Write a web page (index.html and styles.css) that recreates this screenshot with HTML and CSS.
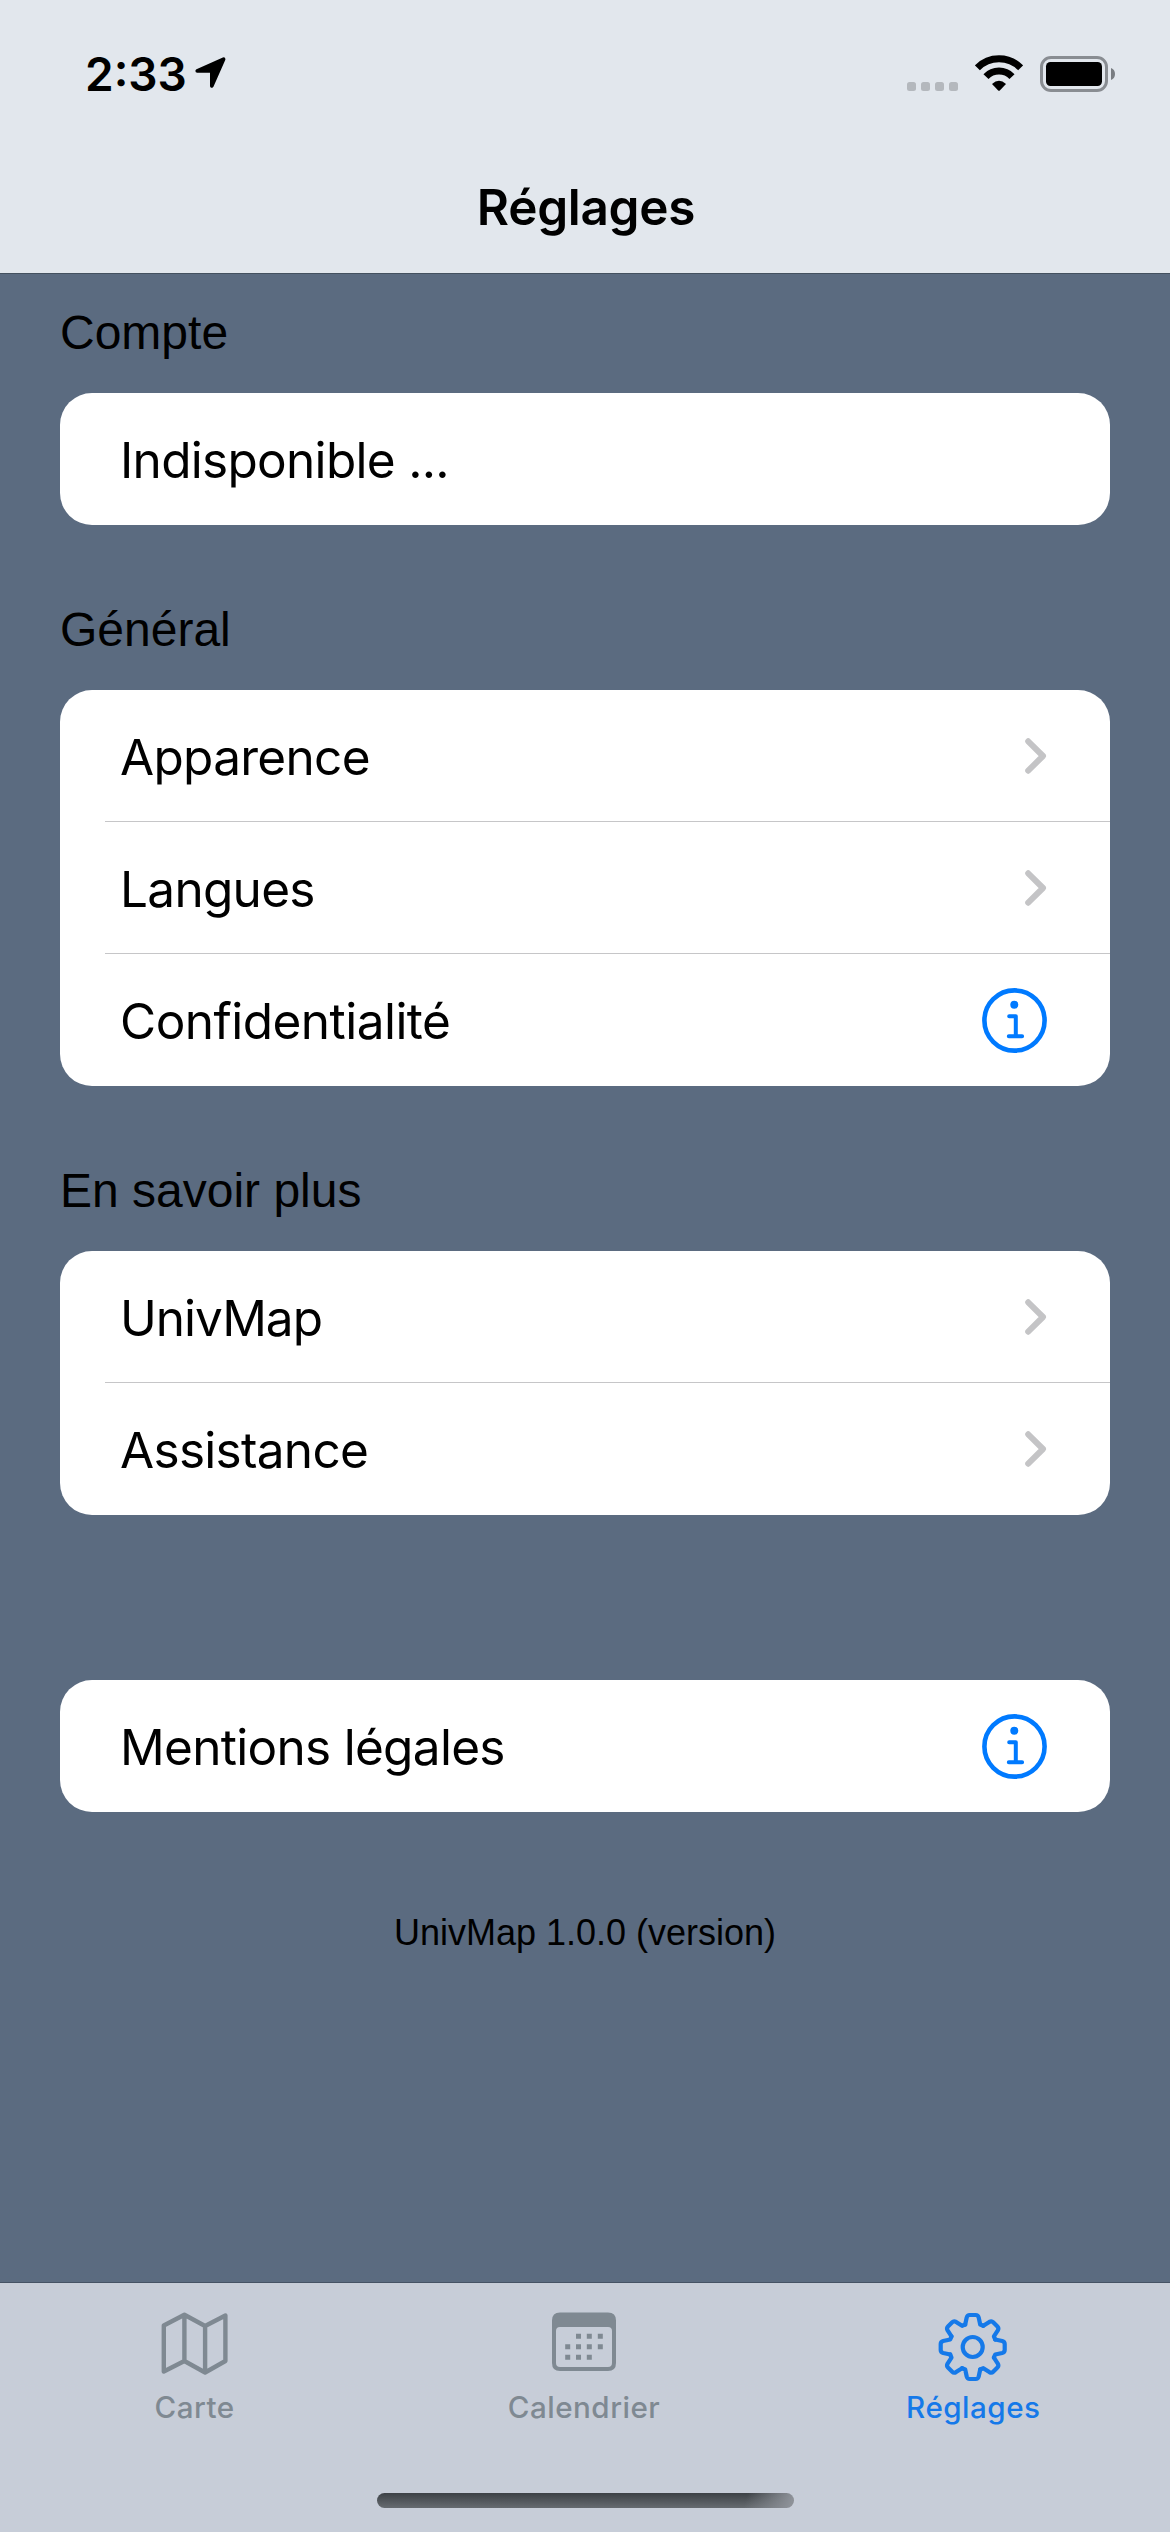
FILE: index.html
```html
<!DOCTYPE html>
<html lang="fr">
<head>
<meta charset="utf-8">
<title>Réglages</title>
<link rel="stylesheet" href="styles.css">
</head>
<body>
<svg width="0" height="0" class="defs">
  <symbol id="chevron" viewBox="0 0 22 36"><path d="M3.2 3.3 18 18 3.2 32.7" fill="none" stroke="#c4c4c6" stroke-width="6" stroke-linecap="round" stroke-linejoin="round"/></symbol>
  <symbol id="info" viewBox="0 0 65 65"><g fill="none" stroke="#007aff" stroke-width="4.6"><circle cx="32.5" cy="32.5" r="30.1"/><path d="M27.2 28.2h6.6v20M26.8 48.3h13.3" stroke-width="4" stroke-linecap="round" stroke-linejoin="round"/></g><circle cx="32.3" cy="16.8" r="4" fill="#007aff"/></symbol>
  <path id="tooth" d="M-7.5-22.5-6-29.5Q-5.3-32-3-32H3Q5.3-32 6-29.5L7.5-22.5 10.6-21.2"/>
</svg>
<div class="screen">
  <header class="top">
    <div class="status">
      <div class="clock"><span class="time">2:33</span>
        <svg class="arrow" width="32" height="32" viewBox="0 0 32 32"><path d="M2.2 14 28.6 2.2 16.8 29V14Z" stroke="#000" stroke-width="3.6" stroke-linejoin="round"/></svg>
      </div>
      <div class="indicators">
        <svg width="51" height="9" class="dots" fill="#b4b8bd"><rect width="9" height="9" rx="2.5"/><rect x="14" width="9" height="9" rx="2.5"/><rect x="28" width="9" height="9" rx="2.5"/><rect x="42" width="9" height="9" rx="2.5"/></svg>
        <svg width="48" height="36" viewBox="0 0 48 36" class="wifi"><g fill="none" stroke="#000" stroke-width="7"><path d="M2.4 12.8A30.4 30.4 0 0 1 45.6 12.8"/><path d="M11 21.6A18 18 0 0 1 37 21.6"/></g><path d="M17 29Q24 22.4 31 29L24.8 35.4Q24 36 23.2 35.4Z"/></svg>
        <svg width="75" height="36" viewBox="0 0 75 36" class="battery"><rect x="1.5" y="1.5" width="65" height="33" rx="9.5" fill="none" stroke="#898d92" stroke-width="3"/><rect x="6" y="6" width="56" height="24" rx="4.5"/><path d="M71 12Q75 13.5 75 18T71 24Z" fill="#797d82"/></svg>
      </div>
    </div>
    <h1 class="title">Réglages</h1>
  </header>
  <main class="content">
    <h2 class="group">Compte</h2>
    <ul class="card"><li class="row"><span>Indisponible ...</span></li></ul>
    <h2 class="group">Général</h2>
    <ul class="card">
      <li class="row"><span>Apparence</span><svg class="chevron"><use href="#chevron"/></svg></li>
      <li class="row"><span>Langues</span><svg class="chevron"><use href="#chevron"/></svg></li>
      <li class="row"><span class="loose">Confidentialité</span><svg class="info"><use href="#info"/></svg></li>
    </ul>
    <h2 class="group">En savoir plus</h2>
    <ul class="card">
      <li class="row"><span class="tight">UnivMap</span><svg class="chevron"><use href="#chevron"/></svg></li>
      <li class="row"><span>Assistance</span><svg class="chevron"><use href="#chevron"/></svg></li>
    </ul>
    <ul class="card legal"><li class="row"><span>Mentions légales</span><svg class="info"><use href="#info"/></svg></li></ul>
    <p class="version">UnivMap 1.0.0 (version)</p>
  </main>
  <footer class="bottom">
    <nav class="tabs">
      <div class="tab">
        <svg width="70" height="70" viewBox="-34.6 -35 70 70"><path d="M-30.8-21.5-10.2-32.3 10.5-21 30.8-31.5V14L10.5 25.5-10.2 14-30.8 24.5ZM-10.2-32.3V14M10.5-21V25.5" fill="none" stroke="#7f8992" stroke-width="4.4" stroke-linejoin="round"/></svg>
        <span>Carte</span>
      </div>
      <div class="tab">
        <svg width="70" height="70" viewBox="-35 -35 70 70" fill="#7f8992"><path fill-rule="evenodd" d="M-24-34.5H24Q32-34.5 32-26.5V16Q32 24 24 24H-24Q-32 24-32 16V-26.5Q-32-34.5-24-34.5ZM-24-20Q-28-20-28-16V16Q-28 20-24 20H24Q28 20 28 16V-16Q28-20 24-20Z"/><path d="M-5.5-10.7h.01M5.3-10.7h.01M16.3-10.7h.01M-16.3-.3h.01M-5.5-.3h.01M5.3-.3h.01M16.3-.3h.01M-16.3 10.3h.01M-5.5 10.3h.01M5.3 10.3h.01" stroke="#7f8992" stroke-width="5" stroke-linecap="square"/></svg>
        <span>Calendrier</span>
      </div>
      <div class="tab active">
        <svg width="70" height="70" viewBox="-34.7 -35 70 70" fill="none" stroke="#1579e9" stroke-width="4.2" stroke-linecap="round" stroke-linejoin="round"><use href="#tooth"/><use href="#tooth" transform="rotate(45)"/><use href="#tooth" transform="rotate(90)"/><use href="#tooth" transform="rotate(135)"/><use href="#tooth" transform="rotate(180)"/><use href="#tooth" transform="rotate(225)"/><use href="#tooth" transform="rotate(270)"/><use href="#tooth" transform="rotate(315)"/><circle r="10"/></svg>
        <span>Réglages</span>
      </div>
    </nav>
    <div class="home"></div>
  </footer>
</div>
</body>
</html>
```
FILE: styles.css
```css
* { box-sizing: border-box; margin: 0; padding: 0; }
body { width: 1170px; height: 2532px; background: #5b6b80; color: #000; font-family: Inter, sans-serif; }
svg { display: block; flex: none; }
.defs { position: absolute; }
.screen { height: 2532px; display: flex; flex-direction: column; }
.top { height: 274px; background: #e2e7ed; border-bottom: 1px solid #44515f; }
.status { height: 141px; padding: 0 55px 0 85px; display: flex; justify-content: space-between; }
.clock { display: flex; padding-top: 46px; }
.time { font-size: 46px; line-height: 56px; font-weight: 600; width: 110px; white-space: nowrap; }
.arrow { margin-top: 11px; }
.indicators { display: flex; padding-top: 55px; }
.dots { margin: 27px 17px 0 0; }
.wifi { margin-right: 17px; }
.battery { margin-top: 1px; }
.title { height: 132px; padding-left: 2px; font-size: 49.5px; line-height: 132px; font-weight: 600; letter-spacing: -0.3px; text-align: center; }
.content { flex: 1; padding: 0 60px; }
.group { font: 400 48px/56px "Liberation Sans", Arial, sans-serif; height: 165px; padding-top: 77px; }
.group:first-child { height: 119px; padding-top: 31px; }
.card { list-style: none; background: #fff; border-radius: 32px; overflow: hidden; }
.row { height: 132px; padding: 0 63px 0 60px; display: flex; align-items: center; justify-content: space-between; font-size: 49.5px; line-height: 60px; letter-spacing: -0.7px; white-space: nowrap; }
.row:not(:last-child) { background: linear-gradient(#c6c6c8, #c6c6c8) 45px 131px / 1005px 1px no-repeat; }
.row span { padding-top: 2px; }
.tight { letter-spacing: -1px; }
.loose { letter-spacing: -0.53px; }
.chevron { width: 22px; height: 36px; }
.info { width: 65px; height: 65px; }
.legal { margin-top: 165px; }
.version { margin-top: 100px; font: 36px/42px "Liberation Sans", Arial, sans-serif; text-align: center; }
.bottom { height: 250px; background: #c7cdd8; border-top: 1px solid #455264; }
.tabs { display: grid; grid-template-columns: repeat(3, 1fr); width: 1168px; height: 210px; padding-top: 29px; }
.tab { display: flex; flex-direction: column; align-items: center; color: #7f8992; font-size: 29.6px; line-height: 36px; font-weight: 500; letter-spacing: 0.5px; }
.tab span { margin-top: 7px; }
.active { color: #1579e9; }
.home { width: 417px; height: 15px; margin-left: 377px; border-radius: 8px; background: linear-gradient(105deg, transparent 88%, #8d9198 99%), linear-gradient(#3d4146, #666b70); }
```
